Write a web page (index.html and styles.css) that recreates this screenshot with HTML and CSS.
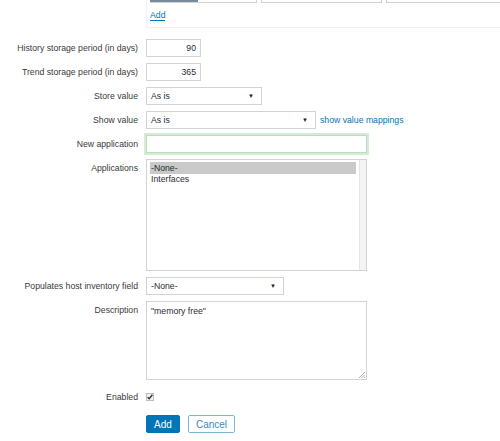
FILE: index.html
```html
<!DOCTYPE html>
<html>
<head>
<meta charset="utf-8">
<link rel="stylesheet" href="styles.css">
</head>
<body>
<div class="form">
  <div class="lbl"></div>
  <div class="tablebox">
    <div class="tabs">
      <div class="tab t1"><div class="bar"></div></div>
      <div class="tab t2"></div>
      <div class="tab t3"></div>
    </div>
    <a class="link add-link">Add</a>
  </div>

  <div class="lbl first">History storage period (in days)</div>
  <div class="ctl first"><div class="input num">90</div></div>

  <div class="lbl">Trend storage period (in days)</div>
  <div class="ctl"><div class="input num">365</div></div>

  <div class="lbl">Store value</div>
  <div class="ctl"><div class="select w116"><span>As is</span><span class="arrow">&#9660;</span></div></div>

  <div class="lbl">Show value</div>
  <div class="ctl"><div class="select w170"><span>As is</span><span class="arrow">&#9660;</span></div><a class="link map">show value mappings</a></div>

  <div class="lbl">New application</div>
  <div class="ctl"><div class="input wide focus"></div></div>

  <div class="lbl top">Applications</div>
  <div class="ctl">
    <div class="listbox">
      <div class="opts">
        <div class="opt sel">-None-</div>
        <div class="opt">Interfaces</div>
      </div>
      <div class="sbar"></div>
    </div>
  </div>

  <div class="lbl">Populates host inventory field</div>
  <div class="ctl"><div class="select w138"><span>-None-</span><span class="arrow">&#9660;</span></div></div>

  <div class="lbl top">Description</div>
  <div class="ctl">
    <div class="textarea">"memory free"
      <svg class="grip" width="6" height="6" viewBox="0 0 6 6"><path d="M6 0 L0 6 M6 2.5 L2.5 6 M6 5 L5 6" stroke="#9a9a9a" stroke-width="0.8"/></svg>
    </div>
  </div>

  <div class="lbl enabled">Enabled</div>
  <div class="ctl enabled">
    <div class="check"><svg width="8" height="8" viewBox="0 0 8 8"><path d="M1.6 4.2 L3.2 5.8 L6.4 1.8" fill="none" stroke="#333" stroke-width="1.4"/></svg></div>
  </div>

  <div class="lbl"></div>
  <div class="ctl buttons">
    <button class="btn primary">Add</button>
    <button class="btn secondary">Cancel</button>
  </div>
</div>
</body>
</html>
```
FILE: styles.css
```css
html, body {
  margin: 0;
  padding: 0;
  background: #fff;
}
body {
  font-family: "Liberation Sans", Arial, sans-serif;
  font-size: 8.7px;
  color: #1f2c33;
  width: 500px;
  height: 441px;
  overflow: hidden;
}
.form {
  display: grid;
  grid-template-columns: 138px 354px;
  column-gap: 8px;
  row-gap: 6px;
  overflow: hidden;
}
.lbl {
  text-align: right;
  line-height: 18px;
  color: #3a3a3a;
  white-space: nowrap;
}
.lbl.top {
  line-height: 19px;
}
.first {
  margin-top: 5px;
}
.enabled {
  margin-top: 2px;
}
.ctl {
  display: flex;
  align-items: center;
  gap: 4px;
}
.tablebox {
  height: 27px;
  border-left: 1px solid #f1f1f1;
  border-bottom: 1px solid #f1f1f1;
  padding-left: 3px;
  overflow: hidden;
}
.tabs {
  display: flex;
  gap: 4px;
  height: 3px;
}
.tab {
  height: 2px;
  border: 1px solid #d2d2d2;
  border-top: none;
  background: #fff;
  flex: none;
}
.t1 { width: 105px; }
.t1 .bar {
  width: 48px;
  height: 2px;
  background: #768d99;
  margin-left: -1px;
}
.t2 { width: 119px; }
.t3 { flex: 1; border-right: none; }
.link {
  color: #0275b8;
  text-decoration: none;
}
.add-link {
  display: inline-block;
  margin-top: 7px;
  line-height: 10px;
  border-bottom: 1px solid #0275b8;
}
.input, .select, .textarea, .listbox {
  box-sizing: border-box;
  border: 1px solid #d3d3d3;
  background: #fff;
}
.input {
  height: 18px;
  line-height: 16px;
  padding: 0 4px;
}
.num {
  width: 55px;
  text-align: right;
}
.wide {
  width: 221px;
}
.focus {
  border: 1px solid #bcdcbc;
  box-shadow: 0 0 0 2px #d6ebd6;
}
.select {
  height: 18px;
  line-height: 16px;
  padding: 0 4px;
  display: flex;
  justify-content: space-between;
  align-items: center;
}
.arrow {
  font-size: 6px;
  color: #222;
  margin-right: 3px;
}
.w116 { width: 116px; }
.w170 { width: 170px; }
.w138 { width: 138px; }
.listbox {
  width: 221px;
  height: 112px;
  display: flex;
  padding: 2px 0 0 3px;
}
.opts {
  flex: 1;
}
.opt {
  line-height: 11px;
  padding-left: 1px;
  margin-right: 3px;
}
.opt.sel {
  background: #c9c9c9;
  line-height: 12px;
}
.sbar {
  width: 6px;
  margin-top: -2px;
  background: #f4f4f4;
  border-left: 1px solid #e6e6e6;
}
.textarea {
  width: 221px;
  height: 79px;
  padding: 4px 4px;
  position: relative;
  white-space: pre;
  line-height: 11px;
}
.grip {
  position: absolute;
  right: 1px;
  bottom: 1px;
}
.check {
  width: 8px;
  height: 8px;
  box-sizing: border-box;
  border: 1px solid #bdbdbd;
  background: #f3f3f3;
  margin: 5px 0;
  display: flex;
}
.check svg { margin: -1px; }
.buttons {
  margin-top: 3px;
  gap: 8px;
}
.btn {
  font-family: "Liberation Sans", Arial, sans-serif;
  font-size: 10px;
  height: 18px;
  padding: 0;
  box-sizing: border-box;
  border-radius: 2px;
  cursor: pointer;
}
.primary {
  width: 34px;
  background: #0275b8;
  color: #fff;
  border: 1px solid #0275b8;
}
.secondary {
  width: 47px;
  background: #fff;
  color: #3a8ac4;
  border: 1px solid #7eb3d8;
}
```
